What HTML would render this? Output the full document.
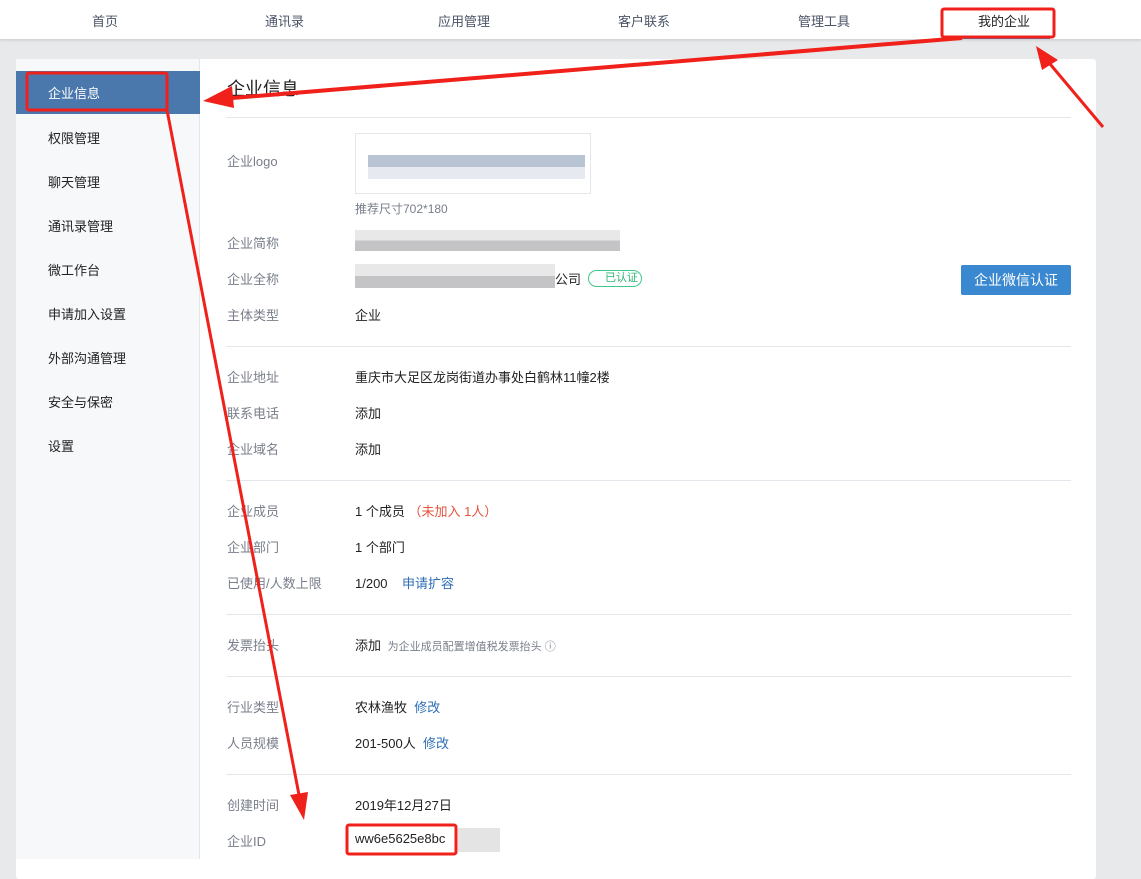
<!DOCTYPE html>
<html><head><meta charset="utf-8"><style>
*{margin:0;padding:0;box-sizing:border-box}
body{width:1141px;height:856px;overflow:hidden;background:#e8e9eb;font-family:"Liberation Sans","Noto Sans CJK SC",sans-serif;font-size:13px;color:#222;position:relative}
.nav{position:absolute;left:0;top:0;width:1141px;height:39px;background:#fff;box-shadow:0 1px 3px rgba(0,0,0,.15)}
.nav span{position:absolute;top:11px;font-size:13px;color:#4a5366}
.card{position:absolute;left:16px;top:59px;width:1080px;height:820px;background:#fff;border-radius:3px}
.side{position:absolute;left:16px;top:59px;width:184px;height:800px;background:#f7f8fa;border-right:1px solid #e3e6ea}
.side div{position:absolute;left:32px;font-size:13px;color:#222}
.act{position:absolute;left:16px;top:71px;width:184px;height:43px;background:#4a78ad}
.t{position:absolute;font-size:13px;white-space:nowrap}
.l{left:227px;color:#787e8a}
.v{left:355px;color:#222}
.hr{position:absolute;left:226px;width:845px;height:1px;background:#e3e6ea}
a{color:#2d6eb5}
.blur{position:absolute}
</style></head><body>
<div class="nav">
<span style="left:92px">首页</span><span style="left:265px">通讯录</span><span style="left:438px">应用管理</span><span style="left:618px">客户联系</span><span style="left:798px">管理工具</span><span style="left:978px;color:#222">我的企业</span>
<div style="position:absolute;left:945px;top:36px;width:105px;height:3px;background:#4a78ad"></div>
</div>
<div class="card"></div>
<div class="side">
<div style="top:69px">权限管理</div><div style="top:113px">聊天管理</div><div style="top:157px">通讯录管理</div><div style="top:201px">微工作台</div><div style="top:245px">申请加入设置</div><div style="top:289px">外部沟通管理</div><div style="top:333px">安全与保密</div><div style="top:377px">设置</div>
</div>
<div class="act"></div>
<div class="t" style="left:48px;top:83px;color:#fff">企业信息</div>
<div class="t" style="left:227px;top:75px;font-size:18px">企业信息</div>
<div class="hr" style="top:117px"></div>
<div class="t l" style="top:151px">企业logo</div>
<div style="position:absolute;left:355px;top:133px;width:236px;height:61px;border:1px solid #e3e6ea"></div>
<div class="blur" style="left:368px;top:155px;width:217px;height:24px;background:linear-gradient(180deg,#b8c4d4 50%,#e6eaf0 50%)"></div>
<div class="t" style="left:355px;top:200px;font-size:12px;color:#787e8a">推荐尺寸702*180</div>
<div class="t l" style="top:233px">企业简称</div>
<div class="blur" style="left:355px;top:230px;width:265px;height:21px;background:linear-gradient(180deg,#e8e8e8 50%,#c4c4c6 50%)"></div>
<div class="t l" style="top:269px">企业全称</div>
<div class="blur" style="left:355px;top:264px;width:200px;height:24px;background:linear-gradient(180deg,#e8e8e8 50%,#c4c4c6 50%)"></div>
<div class="t" style="left:555px;top:269px">公司</div>
<div style="position:absolute;left:588px;top:270px;width:54px;height:17px;border:1px solid #3fc88a;border-radius:9px;color:#2bb673;font-size:11px;padding-left:16px;line-height:15px">已认证</div>
<div style="position:absolute;left:961px;top:265px;width:110px;height:30px;background:#3a88d0;border-radius:2px;color:#fff;font-size:14px;text-align:center;line-height:30px">企业微信认证</div>
<div class="t l" style="top:305px">主体类型</div><div class="t v" style="top:305px">企业</div>
<div class="hr" style="top:346px"></div>
<div class="t l" style="top:367px">企业地址</div><div class="t v" style="top:367px">重庆市大足区龙岗街道办事处白鹤林11幢2楼</div>
<div class="t l" style="top:403px">联系电话</div><div class="t v" style="top:403px">添加</div>
<div class="t l" style="top:439px">企业域名</div><div class="t v" style="top:439px">添加</div>
<div class="hr" style="top:480px"></div>
<div class="t l" style="top:501px">企业成员</div><div class="t v" style="top:501px">1 个成员 <span style="color:#e5533d">（未加入 1人）</span></div>
<div class="t l" style="top:537px">企业部门</div><div class="t v" style="top:537px">1 个部门</div>
<div class="t l" style="top:573px">已使用/人数上限</div><div class="t v" style="top:573px">1/200 &nbsp;&nbsp;&nbsp;<a>申请扩容</a></div>
<div class="hr" style="top:614px"></div>
<div class="t l" style="top:635px">发票抬头</div><div class="t v" style="top:635px">添加 <span style="font-size:11px;color:#787e8a">&nbsp;为企业成员配置增值税发票抬头 ⓘ</span></div>
<div class="hr" style="top:676px"></div>
<div class="t l" style="top:697px">行业类型</div><div class="t v" style="top:697px">农林渔牧 &nbsp;<a>修改</a></div>
<div class="t l" style="top:733px">人员规模</div><div class="t v" style="top:733px">201-500人 &nbsp;<a>修改</a></div>
<div class="hr" style="top:774px"></div>
<div class="t l" style="top:795px">创建时间</div><div class="t v" style="top:795px">2019年12月27日</div>
<div class="t l" style="top:831px">企业ID</div><div class="t v" style="top:831px">ww6e5625e8bc</div>
<div class="blur" style="left:458px;top:828px;width:42px;height:24px;background:#e4e4e4"></div>
<svg style="position:absolute;left:0;top:0" width="1141" height="856">
<g fill="none" stroke="#f0201a" stroke-width="3">
<rect x="942" y="9" width="112" height="28" rx="2"/>
<rect x="27" y="73" width="140" height="37" rx="2"/>
<rect x="347" y="825" width="109" height="29" rx="2"/>
<line x1="962" y1="38" x2="220" y2="99" stroke-width="4"/>
<line x1="1103" y1="127" x2="1045" y2="58" stroke-width="3"/>
<line x1="167" y1="110" x2="300" y2="800" stroke-width="3"/>
</g>
<g fill="#f0201a">
<polygon points="203,101 232,86 234,108"/>
<polygon points="1036,46 1058,60 1042,70"/>
<polygon points="304,820 290,795 308,792"/>
</g>
</svg>
</body></html>
